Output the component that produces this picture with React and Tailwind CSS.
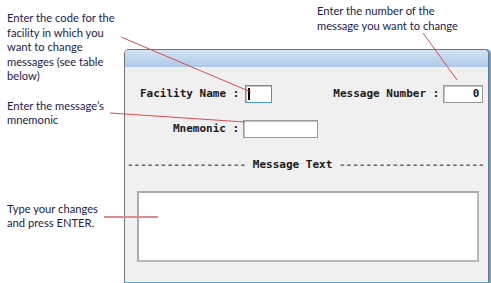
const NOTE = "font-['Lato','Open_Sans',sans-serif] text-[11.2px] leading-[14.5px] text-[#1c1c50]";
const MONO = "font-['DejaVu_Sans_Mono',monospace] font-bold text-[11px] leading-[14px] text-[#1a1a1a] whitespace-pre";

function Field({ width, focused, value }) {
  return (
    <div
      className={`relative h-[18px] ${width} bg-white border ${
        focused ? "border-[#4a92dc]" : "border-[#9a9a9a]"
      } shadow-[inset_1px_1px_0_#c4c4c4] flex items-center justify-end pr-[3px]`}
    >
      {focused ? (
        <span className="absolute left-[2px] top-[2px] h-[12px] w-[2px] bg-black" />
      ) : null}
      {value ? <span className={MONO}>{value}</span> : null}
    </div>
  );
}

function Leaders() {
  return (
    <svg
      className="pointer-events-none absolute inset-0"
      width="491"
      height="283"
      viewBox="0 0 491 283"
    >
      <line x1="121" y1="37" x2="251" y2="92" stroke="#d23c3c" strokeWidth="0.9" />
      <line x1="110" y1="113" x2="245" y2="122" stroke="#d23c3c" strokeWidth="0.9" />
      <line x1="423" y1="33" x2="457" y2="80" stroke="#d23c3c" strokeWidth="0.9" />
      <line x1="104" y1="217" x2="158" y2="217" stroke="#dc8e8e" strokeWidth="2" />
    </svg>
  );
}

export default function App() {
  return (
    <div className="relative flex h-[283px] w-[491px] overflow-hidden bg-white">
      <div className="flex w-[124px] shrink-0 flex-col pl-[7px]">
        <p className={`${NOTE} mt-[11px]`}>
          Enter the code for the
          <br />
          facility in which you
          <br />
          want to change
          <br />
          messages (see table
          <br />
          below)
        </p>
        <p className={`${NOTE} mt-[15px]`}>
          Enter the message’s
          <br />
          mnemonic
        </p>
        <p className={`${NOTE} mt-[74px]`}>
          Type your changes
          <br />
          and press ENTER.
        </p>
      </div>

      <div className="flex flex-1 flex-col">
        <div className="h-[49px] pl-[193px] pt-[4px]">
          <p className={NOTE}>
            Enter the number of the
            <br />
            message you want to change
          </p>
        </div>

        <div className="mr-[2px] flex flex-1 flex-col overflow-hidden rounded-t-[5px] border border-[#737373] border-b-[#5aa3d4] bg-[#f0f0f0] shadow-[2px_0_0_#5aa3d4]">
          <div className="h-[17px] bg-gradient-to-b from-[#d4e3f4] to-[#adc9e9]" />

          <div className="mt-[18px] flex items-center pl-[15px]">
            <span className={MONO}>Facility Name :</span>
            <div className="ml-[6px]">
              <Field width="w-[27px]" focused />
            </div>
            <span className={`${MONO} ml-[61px]`}>Message Number :</span>
            <div className="ml-[4px]">
              <Field width="w-[40px]" value="0" />
            </div>
          </div>

          <div className="mt-[17px] flex items-center pl-[48px]">
            <span className={MONO}>Mnemonic :</span>
            <div className="ml-[4px]">
              <Field width="w-[75px]" />
            </div>
          </div>

          <div className={`${MONO} mt-[20px] pl-[2px]`}>
            <span className="text-[#6a6a6a]">------------------ </span>
            Message Text
            <span className="text-[#6a6a6a]"> ----------------------</span>
          </div>

          <div className="ml-[12px] mt-[19px] h-[71px] w-[342px] border-2 border-[#ababab] border-b-[#b8b8b8] border-r-[#b8b8b8] bg-white" />
        </div>
      </div>

      <Leaders />
    </div>
  );
}
